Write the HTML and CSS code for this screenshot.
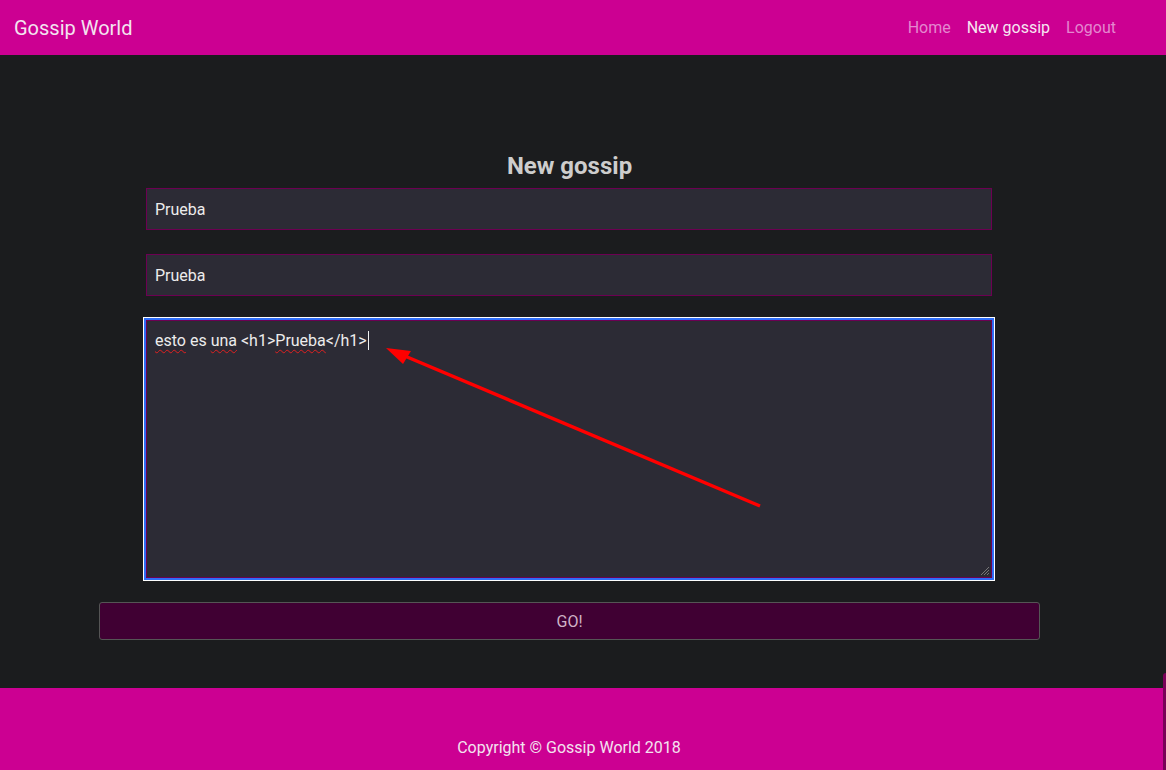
FILE: index.html
```html
<!DOCTYPE html>
<html lang="es">
<head>
<meta charset="utf-8">
<title>Gossip World</title>
<link rel="stylesheet" href="styles.css">
</head>
<body>
<nav class="navbar">
  <a class="brand" href="#">Gossip World</a>
  <ul class="nav">
    <li><a class="nav-link" href="#">Home</a></li>
    <li><a class="nav-link active" href="#">New gossip</a></li>
    <li><a class="nav-link" href="#">Logout</a></li>
  </ul>
</nav>
<main class="main">
  <form class="form">
    <h2 class="title">New gossip</h2>
    <input class="field" type="text" value="Prueba">
    <input class="field" type="text" value="Prueba">
    <div class="area" role="textbox"><span class="sp">esto</span> es <span class="sp">una</span> &lt;h1&gt;<span class="sp">Prueba</span>&lt;/h1&gt;<span class="caret"></span><svg class="grip" width="10" height="10" viewBox="0 0 10 10"><path d="M9 1L1 9M9 4L4 9M9 7L7 9" stroke="#777" stroke-width="1"/></svg></div>
    <button class="go" type="button">GO!</button>
  </form>
</main>
<footer class="footer">Copyright © Gossip World 2018</footer>
<div class="edge"></div>
<svg class="arrow" width="1166" height="770" viewBox="0 0 1166 770">
  <line x1="760" y1="506" x2="400" y2="354" stroke="#ff0000" stroke-width="3.5"/>
  <polygon points="386,348 411,351 403,364" fill="#ff0000"/>
</svg>
</body>
</html>
```
FILE: styles.css
```css
html, body {
  margin: 0;
  padding: 0;
}
body {
  font-family: Roboto, "Liberation Sans", sans-serif;
  background: #1b1c1e;
  overflow: hidden;
  position: relative;
  height: 770px;
}
.navbar {
  height: 55px;
  background: #cc0092;
  display: flex;
  align-items: center;
  justify-content: space-between;
  padding: 0 42px 0 14px;
}
.brand {
  color: #f3e3ef;
  font-size: 20px;
  text-decoration: none;
  line-height: 1;
}
.nav {
  list-style: none;
  margin: 0;
  padding: 0;
  display: flex;
}
.nav-link {
  display: block;
  padding: 8px;
  font-size: 16px;
  color: #e487cf;
  text-decoration: none;
}
.nav-link.active {
  color: #f6e6f1;
}
.main {
  height: 633px;
  box-sizing: border-box;
  padding-top: 97px;
}
.form {
  width: 941px;
  margin-left: 99px;
  display: flex;
  flex-direction: column;
  align-items: flex-start;
}
.title {
  align-self: center;
  margin: 0 0 7px;
  font-size: 24px;
  line-height: 29px;
  font-weight: 700;
  color: #cdcdcd;
}
.field, .area {
  box-sizing: border-box;
  width: 846px;
  background: #2c2b35;
  border: 1px solid #6c0052;
  color: #ececec;
  font-family: Roboto, "Liberation Sans", sans-serif;
  font-size: 16px;
  padding: 0 8px;
  margin: 0 0 24px 47px;
  outline: none;
}
.field {
  height: 42px;
}
.area {
  height: 258px;
  padding: 10px 8px;
  line-height: 19px;
  position: relative;
  box-shadow: 0 0 0 2px #2f6df6, 0 0 0 3px #ffffff;
  white-space: pre;
}
.sp {
  text-decoration: underline wavy #e02020;
  text-decoration-thickness: 1px;
  text-underline-offset: 3px;
}
.caret {
  display: inline-block;
  width: 1px;
  height: 19px;
  background: #f0f0f0;
  vertical-align: top;
  margin-left: 1px;
}
.grip {
  position: absolute;
  right: 1px;
  bottom: 1px;
}
.go {
  width: 941px;
  height: 38px;
  background: #400033;
  border: 1px solid #555;
  border-radius: 3px;
  color: #cfb3c6;
  font-family: Roboto, "Liberation Sans", sans-serif;
  font-size: 16px;
  padding: 0;
}
.footer {
  height: 82px;
  box-sizing: border-box;
  background: #cc0092;
  color: #f3e3ef;
  text-align: center;
  font-size: 16px;
  padding: 50px 28px 0 0;
}
.edge {
  position: absolute;
  left: 1163px;
  top: 673px;
  width: 3px;
  height: 97px;
  background: #7a0058;
  border-radius: 3px 0 0 0;
}
.arrow {
  position: absolute;
  left: 0;
  top: 0;
  pointer-events: none;
}
```
